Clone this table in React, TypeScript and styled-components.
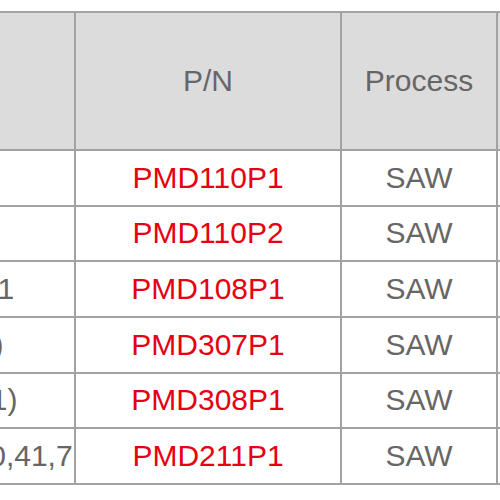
import React from "react";
import styled, { createGlobalStyle } from "styled-components";

const Global = createGlobalStyle`
  html, body {
    margin: 0;
    padding: 0;
    background: #ffffff;
    overflow: hidden;
  }
  body {
    font-family: "Liberation Sans", Arial, sans-serif;
  }
`;

const Viewport = styled.div`
  width: 500px;
  height: 500px;
  overflow: hidden;
  background: #ffffff;
`;

const Table = styled.div`
  display: grid;
  grid-template-columns: 273px 264px 154px 200px;
  grid-template-rows: 136px repeat(6, 53.67px);
  gap: 2px;
  padding: 2px;
  width: max-content;
  margin: 11px 0 0 -201px;
  background: #a2a2a2;
`;

const HeaderCell = styled.div`
  display: flex;
  align-items: center;
  justify-content: center;
  background: #dcdcdc;
  color: #666666;
  font-size: 30px;
  white-space: nowrap;
  overflow: hidden;
`;

const Cell = styled.div<{ $tone?: "red" | "gray" }>`
  display: flex;
  align-items: center;
  justify-content: center;
  background: #ffffff;
  color: ${(p) => (p.$tone === "red" ? "#e60012" : "#666666")};
  font-size: 30px;
  white-space: nowrap;
  overflow: hidden;
`;

const rows = [
  { band: "Band 1", pn: "PMD110P1", process: "SAW" },
  { band: "Band 3", pn: "PMD110P2", process: "SAW" },
  { band: "Band 40,41", pn: "PMD108P1", process: "SAW" },
  { band: "(Band 38)", pn: "PMD307P1", process: "SAW" },
  { band: "B1 (Band 1)", pn: "PMD308P1", process: "SAW" },
  { band: "Band 1,3,38,40,41,7", pn: "PMD211P1", process: "SAW" },
];

export default function App() {
  return (
    <Viewport>
      <Global />
      <Table>
        <HeaderCell>Band</HeaderCell>
        <HeaderCell>P/N</HeaderCell>
        <HeaderCell>Process</HeaderCell>
        <HeaderCell>Package</HeaderCell>
        {rows.map((r) => (
          <React.Fragment key={r.pn}>
            <Cell $tone="gray">{r.band}</Cell>
            <Cell $tone="red">{r.pn}</Cell>
            <Cell $tone="gray">{r.process}</Cell>
            <Cell $tone="gray">LGA</Cell>
          </React.Fragment>
        ))}
      </Table>
    </Viewport>
  );
}
